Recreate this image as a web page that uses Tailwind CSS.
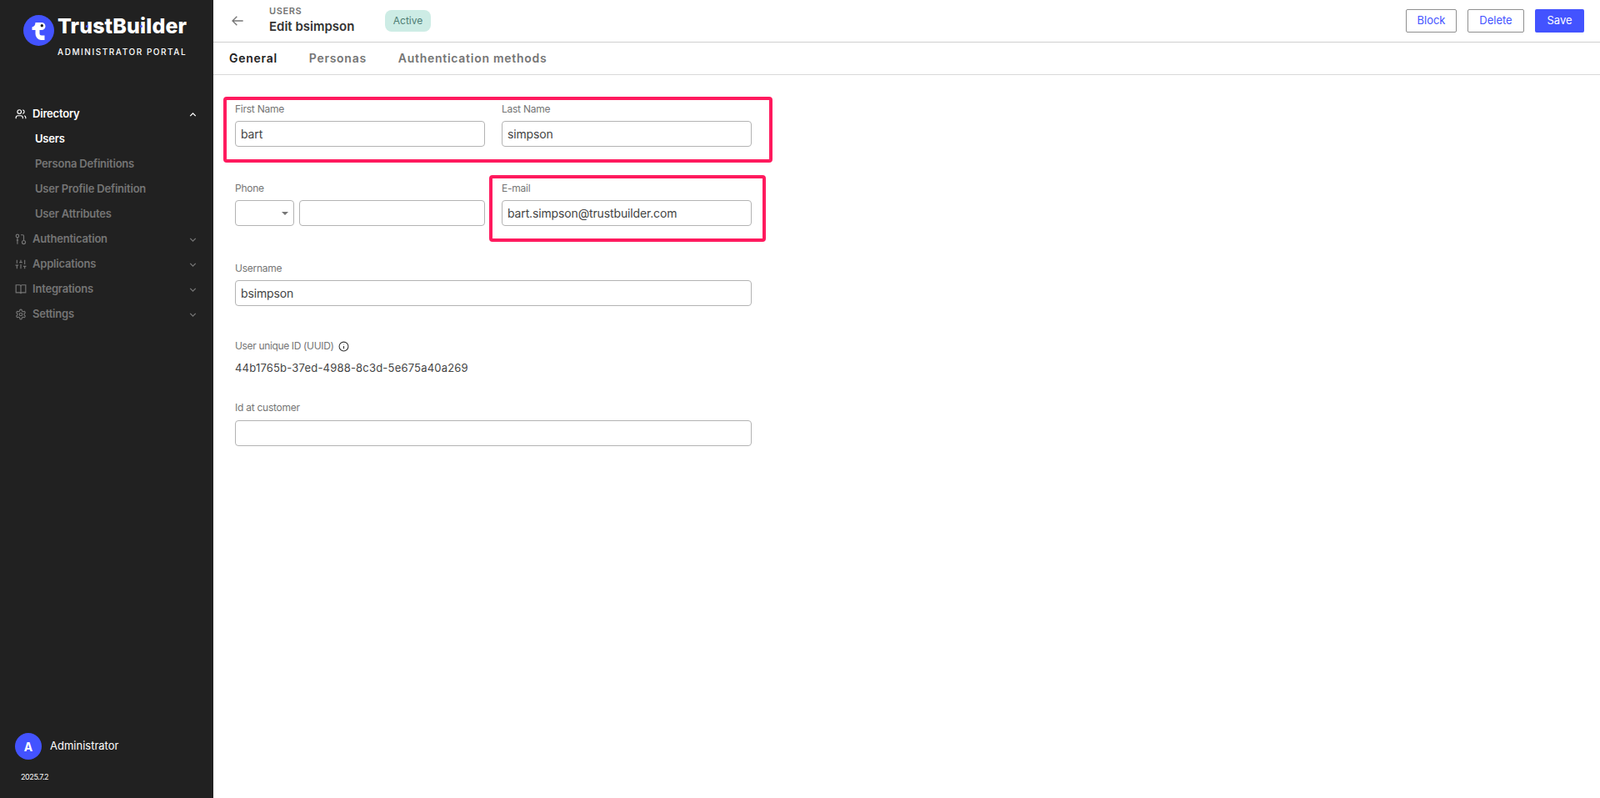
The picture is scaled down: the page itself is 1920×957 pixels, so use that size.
<!DOCTYPE html>
<html lang="en">
  <head>
    <meta charset="UTF-8" />
    <title>Edit bsimpson - TrustBuilder</title>
    <script src="https://cdn.jsdelivr.net/npm/@tailwindcss/browser@4"></script>
  </head>
  <body class="bg-white font-['Inter',sans-serif] h-[957px] overflow-hidden flex">
    <!-- Sidebar -->
    <aside class="w-[256px] h-full shrink-0 bg-[#212121] flex flex-col text-white">
      <div class="h-[72px] pl-[28px] pt-[18px] flex gap-[4px]">
        <svg width="37" height="37" viewBox="0 0 37 37" class="shrink-0">
          <circle cx="18.5" cy="18.5" r="18.5" fill="#4353ff" />
          <path d="M15 9h7a4.500 4.500 0 0 1 0 9h-2.500v4a2.500 2.500 0 0 0 2.500 2.500h3.500v5.500h-4.500a7.500 7.500 0 0 1-6.500-7.500v-4.500h-4v-3.500c2.500-.5 4-2.500 4-5.500z" fill="#fff" />
          <circle cx="22.300" cy="12.800" r="1.700" fill="#212121" />
        </svg>
        <div class="relative">
          <div class="text-[25px] leading-[28px] font-extrabold tracking-[0.1px] mt-[-1px] w-[156px]">TrustBuilder</div>
          <span class="absolute left-[34px] top-[12px] w-[3px] h-[3px] rounded-full bg-[#4353ff]"></span>
          <span class="absolute left-[99px] top-[12px] w-[3px] h-[3px] rounded-full bg-[#4353ff]"></span>
          <div class="text-[10px] leading-[12px] font-medium tracking-[1.55px] mt-[11px] whitespace-nowrap">ADMINISTRATOR PORTAL</div>
        </div>
      </div>

      <nav class="mt-[50px] text-[13px] font-semibold tracking-[-0.2px] text-[#757575]">
        <div class="h-[30px] pl-[18px] pr-[18px] flex items-center text-white">
          <svg width="14" height="14" viewBox="0 0 24 24" fill="none" stroke="currentColor" stroke-width="2" class="mr-[7px]"><circle cx="9" cy="7" r="4" /><path d="M2 21v-2a4 4 0 0 1 4-4h6a4 4 0 0 1 4 4v2M16 3.100a4 4 0 0 1 0 7.800M22 21v-2a4 4 0 0 0-3-3.900" /></svg>
          <span>Directory</span>
          <svg width="13" height="13" viewBox="0 0 24 24" fill="none" stroke="currentColor" stroke-width="2.500" class="ml-auto"><path d="M6 15l6-6 6 6" /></svg>
        </div>
        <div class="h-[30px] pl-[42px] flex items-center text-white">Users</div>
        <div class="h-[30px] pl-[42px] flex items-center">Persona Definitions</div>
        <div class="h-[30px] pl-[42px] flex items-center">User Profile Definition</div>
        <div class="h-[30px] pl-[42px] flex items-center">User Attributes</div>
        <div class="h-[30px] pl-[18px] pr-[18px] flex items-center">
          <svg width="14" height="14" viewBox="0 0 24 24" fill="none" stroke="currentColor" stroke-width="2" class="mr-[7px]"><circle cx="5" cy="5" r="3" /><path d="M5 8v14M3 14h4" /><circle cx="18" cy="18" r="3.500" /><path d="M12 3h4a2 2 0 0 1 2 2v9" /></svg>
          <span>Authentication</span>
          <svg width="13" height="13" viewBox="0 0 24 24" fill="none" stroke="currentColor" stroke-width="2.500" class="ml-auto"><path d="M6 9l6 6 6-6" /></svg>
        </div>
        <div class="h-[30px] pl-[18px] pr-[18px] flex items-center">
          <svg width="14" height="14" viewBox="0 0 24 24" fill="none" stroke="currentColor" stroke-width="2" class="mr-[7px]"><path d="M4 21v-7M4 10V3M12 21v-9M12 8V3M20 21v-5M20 12V3M1 14h6M9 8h6M17 16h6" /></svg>
          <span>Applications</span>
          <svg width="13" height="13" viewBox="0 0 24 24" fill="none" stroke="currentColor" stroke-width="2.500" class="ml-auto"><path d="M6 9l6 6 6-6" /></svg>
        </div>
        <div class="h-[30px] pl-[18px] pr-[18px] flex items-center">
          <svg width="14" height="14" viewBox="0 0 24 24" fill="none" stroke="currentColor" stroke-width="2" class="mr-[7px]"><path d="M2 3h7a3 3 0 0 1 3 3v15a2.500 2.500 0 0 0-2.500-2.500H2zM22 3h-7a3 3 0 0 0-3 3v15a2.500 2.500 0 0 1 2.500-2.500H22z" /></svg>
          <span>Integrations</span>
          <svg width="13" height="13" viewBox="0 0 24 24" fill="none" stroke="currentColor" stroke-width="2.500" class="ml-auto"><path d="M6 9l6 6 6-6" /></svg>
        </div>
        <div class="h-[30px] pl-[18px] pr-[18px] flex items-center">
          <svg width="14" height="14" viewBox="0 0 24 24" fill="none" stroke="currentColor" stroke-width="2" class="mr-[7px]"><circle cx="12" cy="12" r="3" /><path d="M12.200 2h-.4a2 2 0 0 0-2 2v.2a2 2 0 0 1-1 1.700l-.4.300a2 2 0 0 1-2 0l-.2-.1a2 2 0 0 0-2.700.7l-.2.400a2 2 0 0 0 .7 2.700l.2.100a2 2 0 0 1 1 1.700v.6a2 2 0 0 1-1 1.700l-.2.100a2 2 0 0 0-.7 2.700l.2.400a2 2 0 0 0 2.700.7l.2-.1a2 2 0 0 1 2 0l.4.300a2 2 0 0 1 1 1.700v.2a2 2 0 0 0 2 2h.4a2 2 0 0 0 2-2v-.2a2 2 0 0 1 1-1.700l.4-.3a2 2 0 0 1 2 0l.2.100a2 2 0 0 0 2.700-.7l.2-.4a2 2 0 0 0-.7-2.700l-.2-.1a2 2 0 0 1-1-1.700v-.6a2 2 0 0 1 1-1.700l.2-.1a2 2 0 0 0 .7-2.700l-.2-.4a2 2 0 0 0-2.700-.7l-.2.100a2 2 0 0 1-2 0l-.4-.3a2 2 0 0 1-1-1.700V4a2 2 0 0 0-2-2z" /></svg>
          <span>Settings</span>
          <svg width="13" height="13" viewBox="0 0 24 24" fill="none" stroke="currentColor" stroke-width="2.500" class="ml-auto"><path d="M6 9l6 6 6-6" /></svg>
        </div>
      </nav>

      <div class="mt-auto pl-[18px] pb-[19px]">
        <div class="flex items-center gap-[10px]">
          <div class="w-[32px] h-[32px] rounded-full bg-[#4353ff] flex items-center justify-center text-[14px] font-bold">A</div>
          <span class="text-[13px]">Administrator</span>
        </div>
        <div class="mt-[15px] ml-[7px] text-[9px] leading-[12px] tracking-[-0.4px]">2025.7.2</div>
      </div>
    </aside>

    <!-- Main -->
    <main class="flex-1 relative">
      <header class="h-[51px] border-b border-[#cfcfcf] flex items-center pl-[21px] pr-[19px]">
        <svg width="16" height="16" viewBox="0 0 24 24" fill="none" stroke="#757575" stroke-width="2"><path d="M22 12H3M11 4l-8 8 8 8" /></svg>
        <div class="ml-[30px] w-[139px] mt-[-2px]">
          <div class="text-[11px] leading-[14px] font-semibold tracking-[0.6px] text-[#757575]">USERS</div>
          <div class="text-[15px] leading-[20px] mt-[2px] font-semibold text-[#333]">Edit bsimpson</div>
        </div>
        <div class="w-[55px] h-[26px] rounded-[8px] bg-[#cdece5] flex items-center justify-center text-[12px] text-[#4d7d73]">Active</div>
        <div class="ml-auto flex gap-[13px] text-[13px]">
          <button class="w-[61px] h-[28px] border border-[#8f8f8f] rounded-[2px] text-[#4353ff]">Block</button>
          <button class="w-[68px] h-[28px] border border-[#8f8f8f] rounded-[2px] text-[#4353ff]">Delete</button>
          <button class="w-[59px] h-[28px] bg-[#4353ff] rounded-[2px] text-white">Save</button>
        </div>
      </header>

      <div class="h-[39px] pb-[2px] border-b border-[#d9d9d9] pl-[19px] flex items-center gap-[38px] text-[14px] font-semibold tracking-[0.72px] text-[#757575]">
        <span class="text-[#212121]">General</span>
        <span>Personas</span>
        <span>Authentication methods</span>
      </div>

      <form class="w-[620px] ml-[26px] pt-[34px] text-[12px] tracking-[-0.25px] text-[#757575]">
        <div class="grid grid-cols-2 gap-x-[20px]">
          <div>
            <label class="block leading-[14px] mb-[7px]">First Name</label>
            <input value="bart" class="block w-full h-[31px] border border-[#b3b3b3] rounded-[4px] px-[6px] text-[14px] tracking-[-0.14px] text-[#444]" />
          </div>
          <div>
            <label class="block leading-[14px] mb-[7px]">Last Name</label>
            <input value="simpson" class="block w-full h-[31px] border border-[#b3b3b3] rounded-[4px] px-[6px] text-[14px] tracking-[-0.14px] text-[#444]" />
          </div>
        </div>

        <div class="grid grid-cols-2 gap-x-[20px] mt-[43px]">
          <div>
            <label class="block leading-[14px] mb-[7px]">Phone</label>
            <div class="flex gap-[6px]">
              <div class="w-[71px] h-[31px] border border-[#b3b3b3] rounded-[4px] flex items-center justify-end pr-[6px]">
                <span class="w-0 h-0 border-x-[4px] border-x-transparent border-t-[4px] border-t-[#757575]"></span>
              </div>
              <input class="block flex-1 min-w-0 h-[31px] border border-[#b3b3b3] rounded-[4px] px-[6px] text-[14px] text-[#444]" />
            </div>
          </div>
          <div>
            <label class="block leading-[14px] mb-[7px]">E-mail</label>
            <input value="bart.simpson@trustbuilder.com" class="block w-full h-[31px] border border-[#b3b3b3] rounded-[4px] px-[6px] text-[14px] tracking-[-0.14px] text-[#444]" />
          </div>
        </div>

        <div class="mt-[44px]">
          <label class="block leading-[14px] mb-[7px]">Username</label>
          <input value="bsimpson" class="block w-full h-[31px] border border-[#b3b3b3] rounded-[4px] px-[6px] text-[14px] tracking-[-0.14px] text-[#444]" />
        </div>

        <div class="mt-[41px]">
          <div class="flex items-center gap-[6px] leading-[14px] tracking-[-0.35px]">
            <span>User unique ID (UUID)</span>
            <svg width="13" height="13" viewBox="0 0 24 24" fill="none" stroke="#333" stroke-width="2"><circle cx="12" cy="12" r="10" /><path d="M12 11v6M12 7v1" /></svg>
          </div>
          <div class="mt-[11px] text-[13px] leading-[16px] tracking-[0.2px] text-[#444]">44b1765b-37ed-4988-8c3d-5e675a40a269</div>
        </div>

        <div class="mt-[33px]">
          <label class="block leading-[14px] mb-[8px]">Id at customer</label>
          <input class="block w-full h-[31px] border border-[#b3b3b3] rounded-[4px] px-[6px] text-[14px] text-[#444]" />
        </div>
      </form>

      <!-- Annotation frames over the form -->
      <div class="absolute left-[12px] top-[116px] w-[659px] h-[79px] border-[4px] border-[#ff1a5e] rounded-[4px]"></div>
      <div class="absolute left-[331px] top-[210px] w-[332px] h-[80px] border-[4px] border-[#ff1a5e] rounded-[4px]"></div>
    </main>
  </body>
</html>
